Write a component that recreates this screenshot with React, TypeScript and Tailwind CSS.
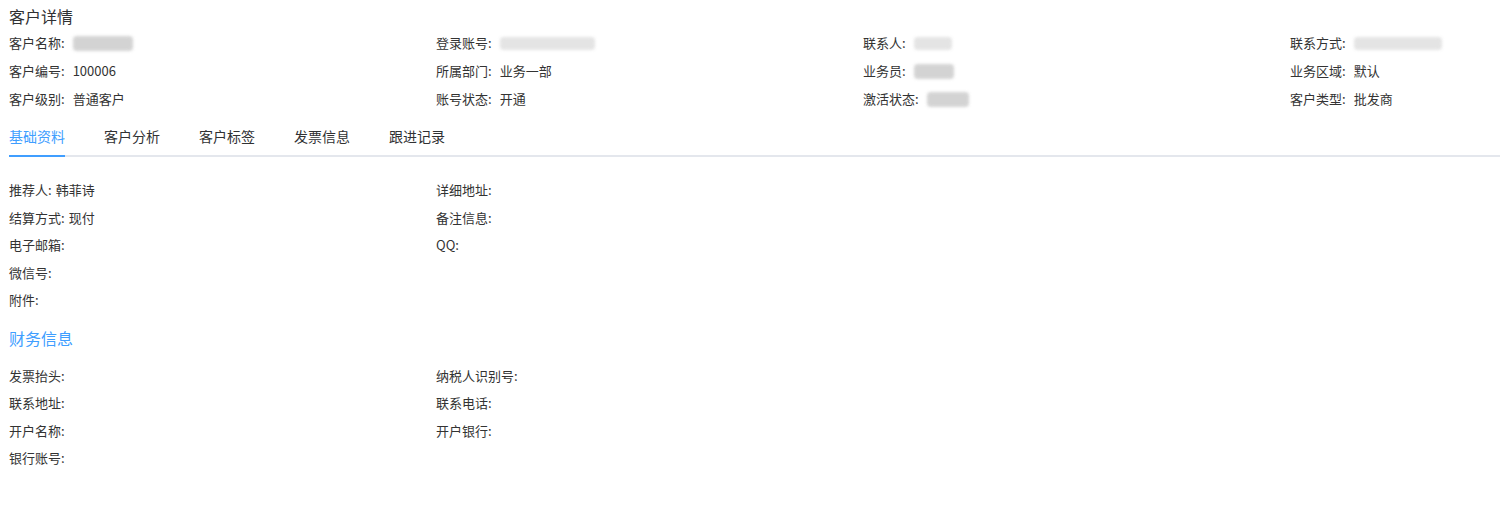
import React from 'react';

const FONT = "font-['Noto_Sans_CJK_SC','Noto_Sans',sans-serif]";

type Val = string | { blur: number; tone: 'light' | 'mid' };

const HEADER: { label: string; value: Val }[][] = [
  [
    { label: '客户名称', value: { blur: 60, tone: 'mid' } },
    { label: '登录账号', value: { blur: 95, tone: 'light' } },
    { label: '联系人', value: { blur: 38, tone: 'light' } },
    { label: '联系方式', value: { blur: 88, tone: 'light' } },
  ],
  [
    { label: '客户编号', value: '100006' },
    { label: '所属部门', value: '业务一部' },
    { label: '业务员', value: { blur: 40, tone: 'mid' } },
    { label: '业务区域', value: '默认' },
  ],
  [
    { label: '客户级别', value: '普通客户' },
    { label: '账号状态', value: '开通' },
    { label: '激活状态', value: { blur: 42, tone: 'mid' } },
    { label: '客户类型', value: '批发商' },
  ],
];

const TABS = ['基础资料', '客户分析', '客户标签', '发票信息', '跟进记录'];

const BASIC: ([string, string] | null)[] = [
  ['推荐人', '韩菲诗'],
  ['详细地址', ''],
  ['结算方式', '现付'],
  ['备注信息', ''],
  ['电子邮箱', ''],
  ['QQ', ''],
  ['微信号', ''],
  null,
  ['附件', ''],
];

const FINANCE: ([string, string] | null)[] = [
  ['发票抬头', ''],
  ['纳税人识别号', ''],
  ['联系地址', ''],
  ['联系电话', ''],
  ['开户名称', ''],
  ['开户银行', ''],
  ['银行账号', ''],
];

function Blur({ w, tone }: { w: number; tone: 'light' | 'mid' }) {
  return (
    <span
      className={
        tone === 'mid'
          ? 'inline-block h-[15px] rounded-sm bg-[#c9c9c9] blur-[1.5px] opacity-80'
          : 'inline-block h-[13px] rounded-sm bg-[#dedede] blur-[1.5px] opacity-80'
      }
      style={{ width: w }}
    />
  );
}

function Field({ label, value }: { label: string; value: Val }) {
  return (
    <div className="flex items-center h-[28px] text-[13px] text-[#333]">
      <span>{label}:</span>
      <span className="ml-[8px] flex items-center">
        {typeof value === 'string' ? value : <Blur w={value.blur} tone={value.tone} />}
      </span>
    </div>
  );
}

function InfoGrid({ items }: { items: ([string, string] | null)[] }) {
  return (
    <div className="grid grid-cols-[427px_427px]">
      {items.map((it, i) =>
        it ? (
          <div key={i} className="h-[27.5px] flex items-center text-[13px] text-[#333]">
            {it[0]}:{it[1] && <span className="ml-[4px]">{it[1]}</span>}
          </div>
        ) : (
          <div key={i} />
        ),
      )}
    </div>
  );
}

export default function App() {
  return (
    <div className={`${FONT} w-[1500px] h-[506px] bg-white overflow-hidden`}>
      <div className="pl-[9px]">
        {/* Title */}
        <div className="pt-[5px] text-[16px] leading-[22px] text-[#303133]">客户详情</div>

        {/* Header info */}
        <div className="pt-[2px]">
          {HEADER.map((row, r) => (
            <div key={r} className="grid grid-cols-[427px_427px_427px_427px] w-max">
              {row.map((f) => (
                <Field key={f.label} label={f.label} value={f.value} />
              ))}
            </div>
          ))}
        </div>

        {/* Tabs */}
        <div className="mt-[5px] relative border-b-2 border-[#e4e7ed]">
          <div className="flex gap-[39px] h-[37px] items-center text-[14px]">
            {TABS.map((t, i) => (
              <div key={t} className={i === 0 ? 'relative h-full flex items-center text-[#409eff]' : 'h-full flex items-center text-[#303133]'}>
                {t}
                {i === 0 && <span className="absolute left-0 right-0 -bottom-[2px] h-[2px] bg-[#409eff]" />}
              </div>
            ))}
          </div>
        </div>

        {/* Basic info */}
        <div className="mt-[19px]">
          <InfoGrid items={BASIC} />
        </div>

        {/* Finance */}
        <div className="mt-[12px] h-[24px] flex items-center text-[16px] text-[#409eff]">财务信息</div>
        <div className="mt-[12px]">
          <InfoGrid items={FINANCE} />
        </div>
      </div>
    </div>
  );
}
